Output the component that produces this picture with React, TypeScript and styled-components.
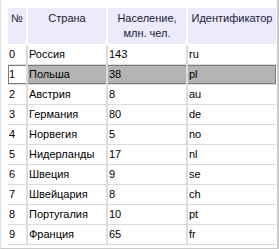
import styled, { createGlobalStyle } from 'styled-components';

const countries = [
  { id: 0, name: 'Россия', people: 143, code: 'ru' },
  { id: 1, name: 'Польша', people: 38, code: 'pl' },
  { id: 2, name: 'Австрия', people: 8, code: 'au' },
  { id: 3, name: 'Германия', people: 80, code: 'de' },
  { id: 4, name: 'Норвегия', people: 5, code: 'no' },
  { id: 5, name: 'Нидерланды', people: 17, code: 'nl' },
  { id: 6, name: 'Швеция', people: 9, code: 'se' },
  { id: 7, name: 'Швейцария', people: 8, code: 'ch' },
  { id: 8, name: 'Португалия', people: 10, code: 'pt' },
  { id: 9, name: 'Франция', people: 65, code: 'fr' },
];

const SELECTED = 1;

export default function App() {
  return (
    <>
      <GlobalStyle />
      <Frame>
        <Grid>
          <colgroup>
            <col style={{ width: 20 }} />
            <col style={{ width: 80 }} />
            <col style={{ width: 80 }} />
            <col style={{ width: 88 }} />
          </colgroup>
          <thead>
            <tr>
              <HeadCell>№</HeadCell>
              <HeadCell>Страна</HeadCell>
              <HeadCell>
                Население,
                <br />
                млн. чел.
              </HeadCell>
              <HeadCell $last>Идентификатор</HeadCell>
            </tr>
          </thead>
          <tbody>
            {countries.map((c) => {
              const sel = c.id === SELECTED;
              return (
                <tr key={c.id}>
                  <Cell $selected={sel} $first>
                    {c.id}
                  </Cell>
                  <Cell $selected={sel}>{c.name}</Cell>
                  <Cell $selected={sel}>{c.people}</Cell>
                  <Cell $selected={sel} $last>
                    {c.code}
                  </Cell>
                </tr>
              );
            })}
          </tbody>
        </Grid>
      </Frame>
    </>
  );
}

const GlobalStyle = createGlobalStyle`
  body {
    margin: 0;
    background: #fff;
    font-family: 'Liberation Sans', Arial, sans-serif;
  }
`;

const Frame = styled.div`
  width: 279px;
  height: 249px;
  box-sizing: border-box;
  padding: 8px 1px 0 7px;
  border-left: 1px solid #e2e2e2;
  border-right: 2px solid #cacaca;
  border-bottom: 1px solid #cacaca;
  overflow: hidden;
`;

const Grid = styled.table`
  width: 268px;
  table-layout: fixed;
  border-collapse: separate;
  border-spacing: 0;
  font-size: 11px;
  color: #000;
`;

const HeadCell = styled.th<{ $last?: boolean }>`
  height: 37px;
  padding: 3px 0 0;
  box-sizing: border-box;
  vertical-align: top;
  text-align: center;
  font-weight: normal;
  line-height: 15px;
  color: #1c1838;
  background: #ebebfc;
  border-right: ${(p) => (p.$last ? 'none' : '2px solid #fff')};
  border-bottom: 1px solid #fff;
  white-space: nowrap;
`;

const Cell = styled.td<{ $selected?: boolean; $first?: boolean; $last?: boolean }>`
  height: 20px;
  box-sizing: border-box;
  padding: 0 0 0 1px;
  line-height: 19px;
  white-space: nowrap;
  overflow: hidden;
  border-right: ${(p) => (p.$last ? 'none' : '2px solid #dcdcdc')};
  border-bottom: 1px solid #dcdcdc;
  background: ${(p) => (p.$selected && !p.$first ? '#b4b4b4' : '#fff')};
  box-shadow: ${(p) =>
    p.$selected
      ? `inset 0 1px 0 #7c7c7c, inset 0 -1px 0 #7c7c7c${
          p.$first ? ', inset 1px 0 0 #7c7c7c' : ''
        }${p.$last ? ', inset -1px 0 0 #7c7c7c' : ''}`
      : 'none'};
`;
